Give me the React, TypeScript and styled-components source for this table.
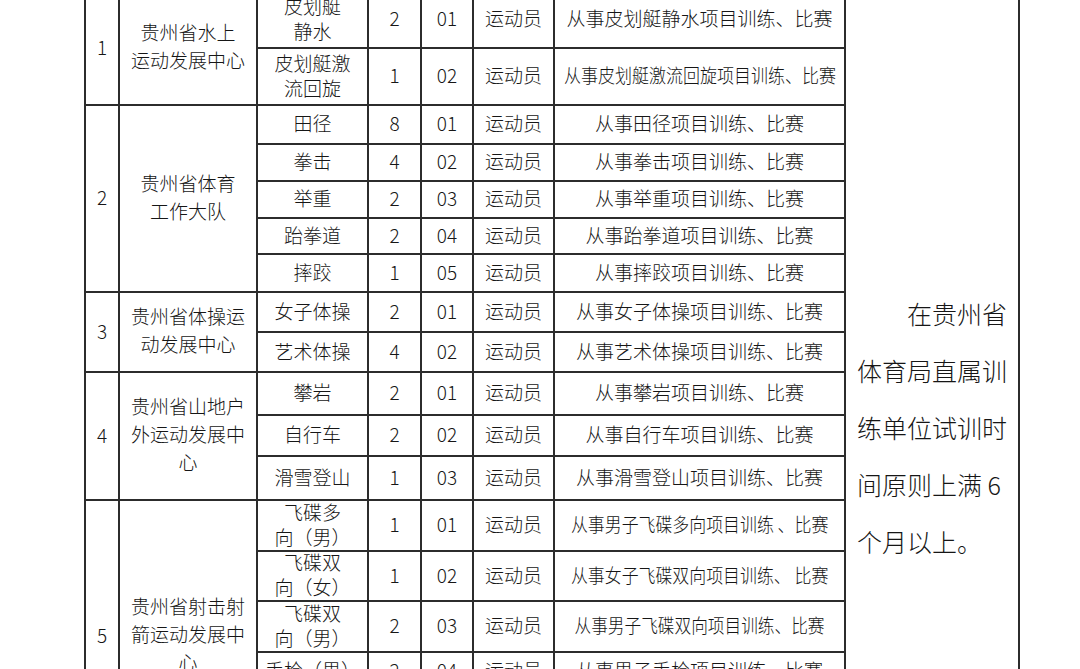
import React from "react";
import styled, { createGlobalStyle } from "styled-components";

const GlobalStyle = createGlobalStyle`
  html, body { margin: 0; padding: 0; background: #ffffff; }
  body {
    font-family: "Noto Sans CJK SC", "Noto Sans", sans-serif;
    font-weight: 300;
    color: #161616;
    overflow: hidden;
  }
`;

const LINE = "#2c2c2c";

const Page = styled.div`
  width: 1080px;
  height: 669px;
  overflow: hidden;
  padding-left: 84px;
  box-sizing: border-box;
  background: #fff;
`;

const Grid = styled.div<{ $rows: string }>`
  display: grid;
  grid-template-columns: 34px 138px 111px 53px 52px 81px 291px 174px;
  grid-template-rows: ${(p) => p.$rows};
  width: max-content;
  margin-top: -10px;
  border-left: 2px solid ${LINE};
  border-top: 2px solid ${LINE};
`;

const Cell = styled.div<{ $span?: number }>`
  box-sizing: border-box;
  border-right: 2px solid ${LINE};
  border-bottom: 2px solid ${LINE};
  display: flex;
  flex-direction: column;
  align-items: center;
  justify-content: center;
  text-align: center;
  font-size: 19px;
  line-height: 25px;
  padding-bottom: 4px;
  white-space: nowrap;
  grid-row: ${(p) => (p.$span ? `span ${p.$span}` : "auto")};
`;

const IndexCell = styled(Cell)``;

const OrgCell = styled(Cell)`
  line-height: 28px;
  padding-left: 6px;
  padding-right: 6px;
`;

const SportCell = styled(Cell)`
  line-height: 25px;
`;

const NumCell = styled(Cell)``;

const RoleCell = styled(Cell)``;

const DescCell = styled(Cell)``;

const DescText = styled.span<{ $sx?: number }>`
  display: inline-block;
  white-space: pre;
  transform: scaleX(${(p) => p.$sx ?? 1});
  transform-origin: center;
`;

const NoteCell = styled(Cell)`
  align-items: flex-start;
  justify-content: flex-start;
  padding: 293px 0 0 11px;
`;

const NoteText = styled.p`
  margin: 0;
  width: 152px;
  font-size: 25px;
  line-height: 57px;
  text-align: left;
  text-indent: 2em;
  white-space: normal;
`;

type Row = {
  sport: string[];
  n: string;
  code: string;
  desc: string;
  h: number;
  sx?: number;
};

type Group = { idx: string; org: string[]; rows: Row[] };

const groups: Group[] = [
  {
    idx: "1",
    org: ["贵州省水上", "运动发展中心"],
    rows: [
      { sport: ["皮划艇", "静水"], n: "2", code: "01", desc: "从事皮划艇静水项目训练、比赛", h: 57 },
      { sport: ["皮划艇激", "流回旋"], n: "1", code: "02", desc: "从事皮划艇激流回旋项目训练、比赛", h: 57, sx: 0.895 },
    ],
  },
  {
    idx: "2",
    org: ["贵州省体育", "工作大队"],
    rows: [
      { sport: ["田径"], n: "8", code: "01", desc: "从事田径项目训练、比赛", h: 39 },
      { sport: ["拳击"], n: "4", code: "02", desc: "从事拳击项目训练、比赛", h: 37 },
      { sport: ["举重"], n: "2", code: "03", desc: "从事举重项目训练、比赛", h: 37 },
      { sport: ["跆拳道"], n: "2", code: "04", desc: "从事跆拳道项目训练、比赛", h: 36 },
      { sport: ["摔跤"], n: "1", code: "05", desc: "从事摔跤项目训练、比赛", h: 38 },
    ],
  },
  {
    idx: "3",
    org: ["贵州省体操运", "动发展中心"],
    rows: [
      { sport: ["女子体操"], n: "2", code: "01", desc: "从事女子体操项目训练、比赛", h: 40 },
      { sport: ["艺术体操"], n: "4", code: "02", desc: "从事艺术体操项目训练、比赛", h: 40 },
    ],
  },
  {
    idx: "4",
    org: ["贵州省山地户", "外运动发展中", "心"],
    rows: [
      { sport: ["攀岩"], n: "2", code: "01", desc: "从事攀岩项目训练、比赛", h: 43 },
      { sport: ["自行车"], n: "2", code: "02", desc: "从事自行车项目训练、比赛", h: 41 },
      { sport: ["滑雪登山"], n: "1", code: "03", desc: "从事滑雪登山项目训练、比赛", h: 44 },
    ],
  },
  {
    idx: "5",
    org: ["贵州省射击射", "箭运动发展中", "心"],
    rows: [
      { sport: ["飞碟多", "向（男）"], n: "1", code: "01", desc: "从事男子飞碟多向项目训练 、比赛", h: 51, sx: 0.89 },
      { sport: ["飞碟双", "向（女）"], n: "1", code: "02", desc: "从事女子飞碟双向项目训练、 比赛", h: 50, sx: 0.89 },
      { sport: ["飞碟双", "向（男）"], n: "2", code: "03", desc: "从事男子飞碟双向项目训练、比赛", h: 51, sx: 0.877 },
      { sport: ["手枪（男）"], n: "2", code: "04", desc: "从事男子手枪项目训练、比赛", h: 38 },
      { sport: ["手枪（女）"], n: "2", code: "05", desc: "从事女子手枪项目训练、比赛", h: 41 },
      { sport: ["步枪（男）"], n: "2", code: "06", desc: "从事男子步枪项目训练、比赛", h: 41 },
    ],
  },
];

const allRows = groups.flatMap((g) => g.rows);
const rowTemplate = allRows.map((r) => `${r.h}px`).join(" ");

const Lines = ({ lines }: { lines: string[] }) => (
  <>
    {lines.map((l, i) => (
      <span key={i}>{l}</span>
    ))}
  </>
);

export default function App() {
  return (
    <>
      <GlobalStyle />
      <Page>
        <Grid $rows={rowTemplate}>
          {groups.map((g, gi) =>
            g.rows.map((r, ri) => (
              <React.Fragment key={`${gi}-${ri}`}>
                {ri === 0 && <IndexCell $span={g.rows.length}>{g.idx}</IndexCell>}
                {ri === 0 && (
                  <OrgCell $span={g.rows.length}>
                    <Lines lines={g.org} />
                  </OrgCell>
                )}
                <SportCell>
                  <Lines lines={r.sport} />
                </SportCell>
                <NumCell>{r.n}</NumCell>
                <NumCell>{r.code}</NumCell>
                <RoleCell>运动员</RoleCell>
                <DescCell>
                  <DescText $sx={r.sx}>{r.desc}</DescText>
                </DescCell>
                {gi === 0 && ri === 0 && (
                  <NoteCell $span={allRows.length}>
                    <NoteText>在贵州省体育局直属训练单位试训时间原则上满 6 个月以上。</NoteText>
                  </NoteCell>
                )}
              </React.Fragment>
            ))
          )}
        </Grid>
      </Page>
    </>
  );
}
